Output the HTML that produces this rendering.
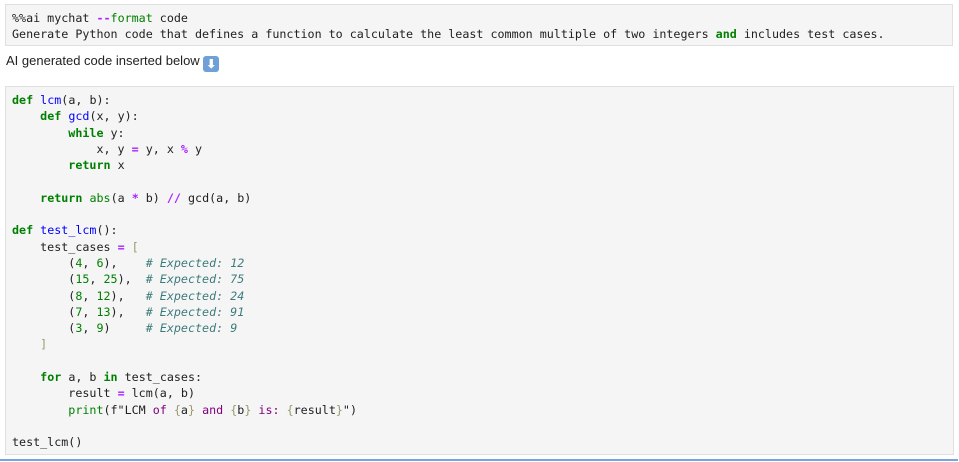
<!DOCTYPE html>
<html><head><meta charset="utf-8"><style>
body{margin:0;width:959px;height:462px;background:#fff;overflow:hidden;position:relative;font-family:"Liberation Sans",sans-serif}
.box{position:absolute;left:5px;right:5px;background:#f5f5f5;border:1px solid #e0e0e0;box-sizing:border-box}
pre{margin:0;font-family:"DejaVu Sans Mono",monospace;font-size:11.7px;line-height:16.3px;color:#212121;white-space:pre}
.k{color:#008000;font-weight:bold}.f{color:#0000ff}.o{color:#aa22ff;font-weight:bold}.n{color:#008000}.c{color:#3d7b7b;font-style:italic}.b{color:#008000}.w{color:#9a9a6a}
.msg{position:absolute;left:6px;top:53px;font-size:13px;color:#222}
.ic{display:inline-block;width:16px;height:16px;background:#6fa0d6;border-radius:3px;vertical-align:-3px;color:#fff;font-size:12px;text-align:center;line-height:16px;font-weight:bold}
</style></head><body>
<div class="box" style="top:4px;height:42px;right:6px"><pre style="padding:5px 0 0 6px">%%ai mychat <span class="o">--</span><span class="n">format</span> code
Generate Python code that defines a function to calculate the least common multiple of two integers <span class="k">and</span> includes test cases.</pre></div>
<div class="msg">AI generated code inserted below <span class="ic">⬇</span></div>
<div class="box" style="top:86px;height:369px"><pre style="padding:5px 0 0 6px"><span class="k">def</span> <span class="f">lcm</span>(a, b):
    <span class="k">def</span> <span class="f">gcd</span>(x, y):
        <span class="k">while</span> y:
            x, y <span class="o">=</span> y, x <span class="o">%</span> y
        <span class="k">return</span> x

    <span class="k">return</span> <span class="b">abs</span>(a <span class="o">*</span> b) <span class="o">//</span> gcd(a, b)

<span class="k">def</span> <span class="f">test_lcm</span>():
    test_cases <span class="o">=</span> <span class="w">[</span>
        (<span class="n">4</span>, <span class="n">6</span>),    <span class="c"># Expected: 12</span>
        (<span class="n">15</span>, <span class="n">25</span>),  <span class="c"># Expected: 75</span>
        (<span class="n">8</span>, <span class="n">12</span>),   <span class="c"># Expected: 24</span>
        (<span class="n">7</span>, <span class="n">13</span>),   <span class="c"># Expected: 91</span>
        (<span class="n">3</span>, <span class="n">9</span>)     <span class="c"># Expected: 9</span>
    <span class="w">]</span>

    <span class="k">for</span> a, b <span class="k">in</span> test_cases:
        result <span class="o">=</span> lcm(a, b)
        <span class="b">print</span>(f"LCM <span style="color:#800080">of</span> <span class="w">{</span>a<span class="w">}</span> <span style="color:#800080">and</span> <span class="w">{</span>b<span class="w">}</span> <span style="color:#800080">is:</span> <span class="w">{</span>result<span class="w">}</span>")

test_lcm()</pre></div>
<div style="position:absolute;left:0;right:1px;top:459px;height:2px;background:#74a6e0"></div>
</body></html>
